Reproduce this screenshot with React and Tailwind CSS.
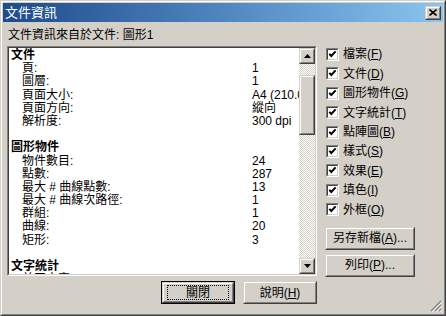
import React from "react";

const rows = [
  { h: "文件" },
  { k: "頁:", v: "1" },
  { k: "圖層:", v: "1" },
  { k: "頁面大小:", v: "A4 (210.0 x 297.0 mm)" },
  { k: "頁面方向:", v: "縱向" },
  { k: "解析度:", v: "300 dpi" },
  {},
  { h: "圖形物件" },
  { k: "物件數目:", v: "24" },
  { k: "點數:", v: "287" },
  { k: "最大 # 曲線點數:", v: "13" },
  { k: "最大 # 曲線次路徑:", v: "1" },
  { k: "群組:", v: "1" },
  { k: "曲線:", v: "20" },
  { k: "矩形:", v: "3" },
  {},
  { h: "文字統計" },
  { k: "美工文字:", v: "1" },
  { k: "段落文字:", v: "0" },
];

const checks = [
  ["檔案", "F"],
  ["文件", "D"],
  ["圖形物件", "G"],
  ["文字統計", "T"],
  ["點陣圖", "B"],
  ["樣式", "S"],
  ["效果", "E"],
  ["填色", "I"],
  ["外框", "O"],
];

const Raised = ({ className = "", children }) => (
  <div className={`border border-t-[#d4d0c8] border-l-[#d4d0c8] border-b-[#404040] border-r-[#404040] ${className}`}>
    <div className="h-full w-full border border-t-white border-l-white border-b-[#808080] border-r-[#808080] bg-[#d4d0c8] flex items-center justify-center">
      {children}
    </div>
  </div>
);

const Arrow = ({ down }) => (
  <svg width="7" height="4" viewBox="0 0 7 4">
    <path d={down ? "M0 0h7L3.5 4z" : "M0 4h7L3.5 0z"} fill="#000" />
  </svg>
);

const Check = () => (
  <div className="w-[13px] h-[13px] border border-t-[#808080] border-l-[#808080] border-b-white border-r-white shrink-0">
    <div className="w-full h-full border border-t-[#404040] border-l-[#404040] border-b-[#d4d0c8] border-r-[#d4d0c8] bg-white flex items-center justify-center">
      <svg width="9" height="9" viewBox="0 0 9 9">
        <path d="M1.3 3.8l2 2.2 4.3-4.6" stroke="#000" strokeWidth="2" fill="none" />
      </svg>
    </div>
  </div>
);

const Key = ({ label, k }) => (
  <span className="whitespace-nowrap">
    {label}(<span className="underline underline-offset-1">{k}</span>)
  </span>
);

export default function App() {
  return (
    <div className="w-[446px] h-[316px] relative border border-t-[#d4d0c8] border-l-[#d4d0c8] border-b-[#404040] border-r-[#404040] text-[12px] text-black font-['Liberation_Sans','Noto_Sans_CJK_TC',sans-serif]">
      <div className="h-full w-full border border-t-white border-l-white border-b-[#808080] border-r-[#808080] bg-[#d4d0c8] p-[1px] flex flex-col">
        {/* title bar */}
        <div className="h-[19px] shrink-0 flex items-center justify-between pl-[2px] pr-[2px] bg-gradient-to-r from-[#1f4b8b] via-[#4f86c0] to-[#8ac6f0] text-white text-[13px]">
          <span>文件資訊</span>
          <Raised className="w-[16px] h-[14px]">
            <svg width="8" height="7" viewBox="0 0 8 7">
              <path d="M0.5 0.5l7 6M7.5 0.5l-7 6" stroke="#000" strokeWidth="1.6" />
            </svg>
          </Raised>
        </div>

        <div className="flex pl-[4px]">
          <div className="w-[310px] shrink-0">
            <div className="h-[24px] flex items-center pt-[2px] pl-[1px]">
              文件資訊來自於文件: 圖形1
            </div>

            {/* list box */}
            <div className="h-[230px] border border-t-[#808080] border-l-[#808080] border-b-white border-r-white">
              <div className="h-full border border-t-[#404040] border-l-[#404040] border-b-[#d4d0c8] border-r-[#d4d0c8] bg-white flex">
                <div className="flex-1 overflow-hidden pl-[2px] pt-[1px] leading-[13.2px]">
                  {rows.map((r, i) =>
                    r.h ? (
                      <div key={i} className="h-[13.2px] font-bold">{r.h}</div>
                    ) : r.k ? (
                      <div key={i} className="h-[13.2px] flex whitespace-nowrap">
                        <span className="w-[241px] shrink-0 pl-[11px]">{r.k}</span>
                        <span>{r.v}</span>
                      </div>
                    ) : (
                      <div key={i} className="h-[13.2px]" />
                    )
                  )}
                </div>
                <div className="w-[16px] shrink-0 flex flex-col bg-[repeating-conic-gradient(#d4d0c8_0%_25%,#ffffff_0%_50%)] bg-[length:2px_2px]">
                  <Raised className="h-[16px] shrink-0">
                    <Arrow />
                  </Raised>
                  <div className="h-[11px] shrink-0" />
                  <Raised className="h-[60px] shrink-0" />
                  <div className="flex-1" />
                  <Raised className="h-[16px] shrink-0">
                    <Arrow down />
                  </Raised>
                </div>
              </div>
            </div>

            <div className="mt-[5px] flex justify-end gap-[8px]">
              <div className="w-[74px] h-[23px] border border-black">
                <Raised className="h-full">
                  <div className="w-[62px] h-[15px] border border-dotted border-black flex items-center justify-center">
                    關閉
                  </div>
                </Raised>
              </div>
              <Raised className="w-[74px] h-[23px]">
                <Key label="說明" k="H" />
              </Raised>
            </div>
          </div>

          {/* right column */}
          <div className="ml-[8px] pt-[22.8px] flex flex-col">
            {checks.map(([label, k]) => (
              <div key={k} className="h-[19.4px] flex items-center gap-[4px] pl-[1px]">
                <Check />
                <Key label={label} k={k} />
              </div>
            ))}
            <Raised className="w-[90px] h-[23px] mt-[7.6px]">
              <span>
                另存新檔(<span className="underline underline-offset-1">A</span>)...
              </span>
            </Raised>
            <Raised className="w-[90px] h-[23px] mt-[4px]">
              <span>
                列印(<span className="underline underline-offset-1">P</span>)...
              </span>
            </Raised>
          </div>
        </div>
      </div>

      <svg className="absolute right-[3px] bottom-[3px]" width="12" height="12" viewBox="0 0 12 12">
        <path d="M11 1L1 11M11 5L5 11M11 9L9 11" stroke="#808080" strokeWidth="1.2" />
        <path d="M12 2L2 12M12 6L6 12M12 10L10 12" stroke="#fff" strokeWidth="0.8" />
      </svg>
    </div>
  );
}
